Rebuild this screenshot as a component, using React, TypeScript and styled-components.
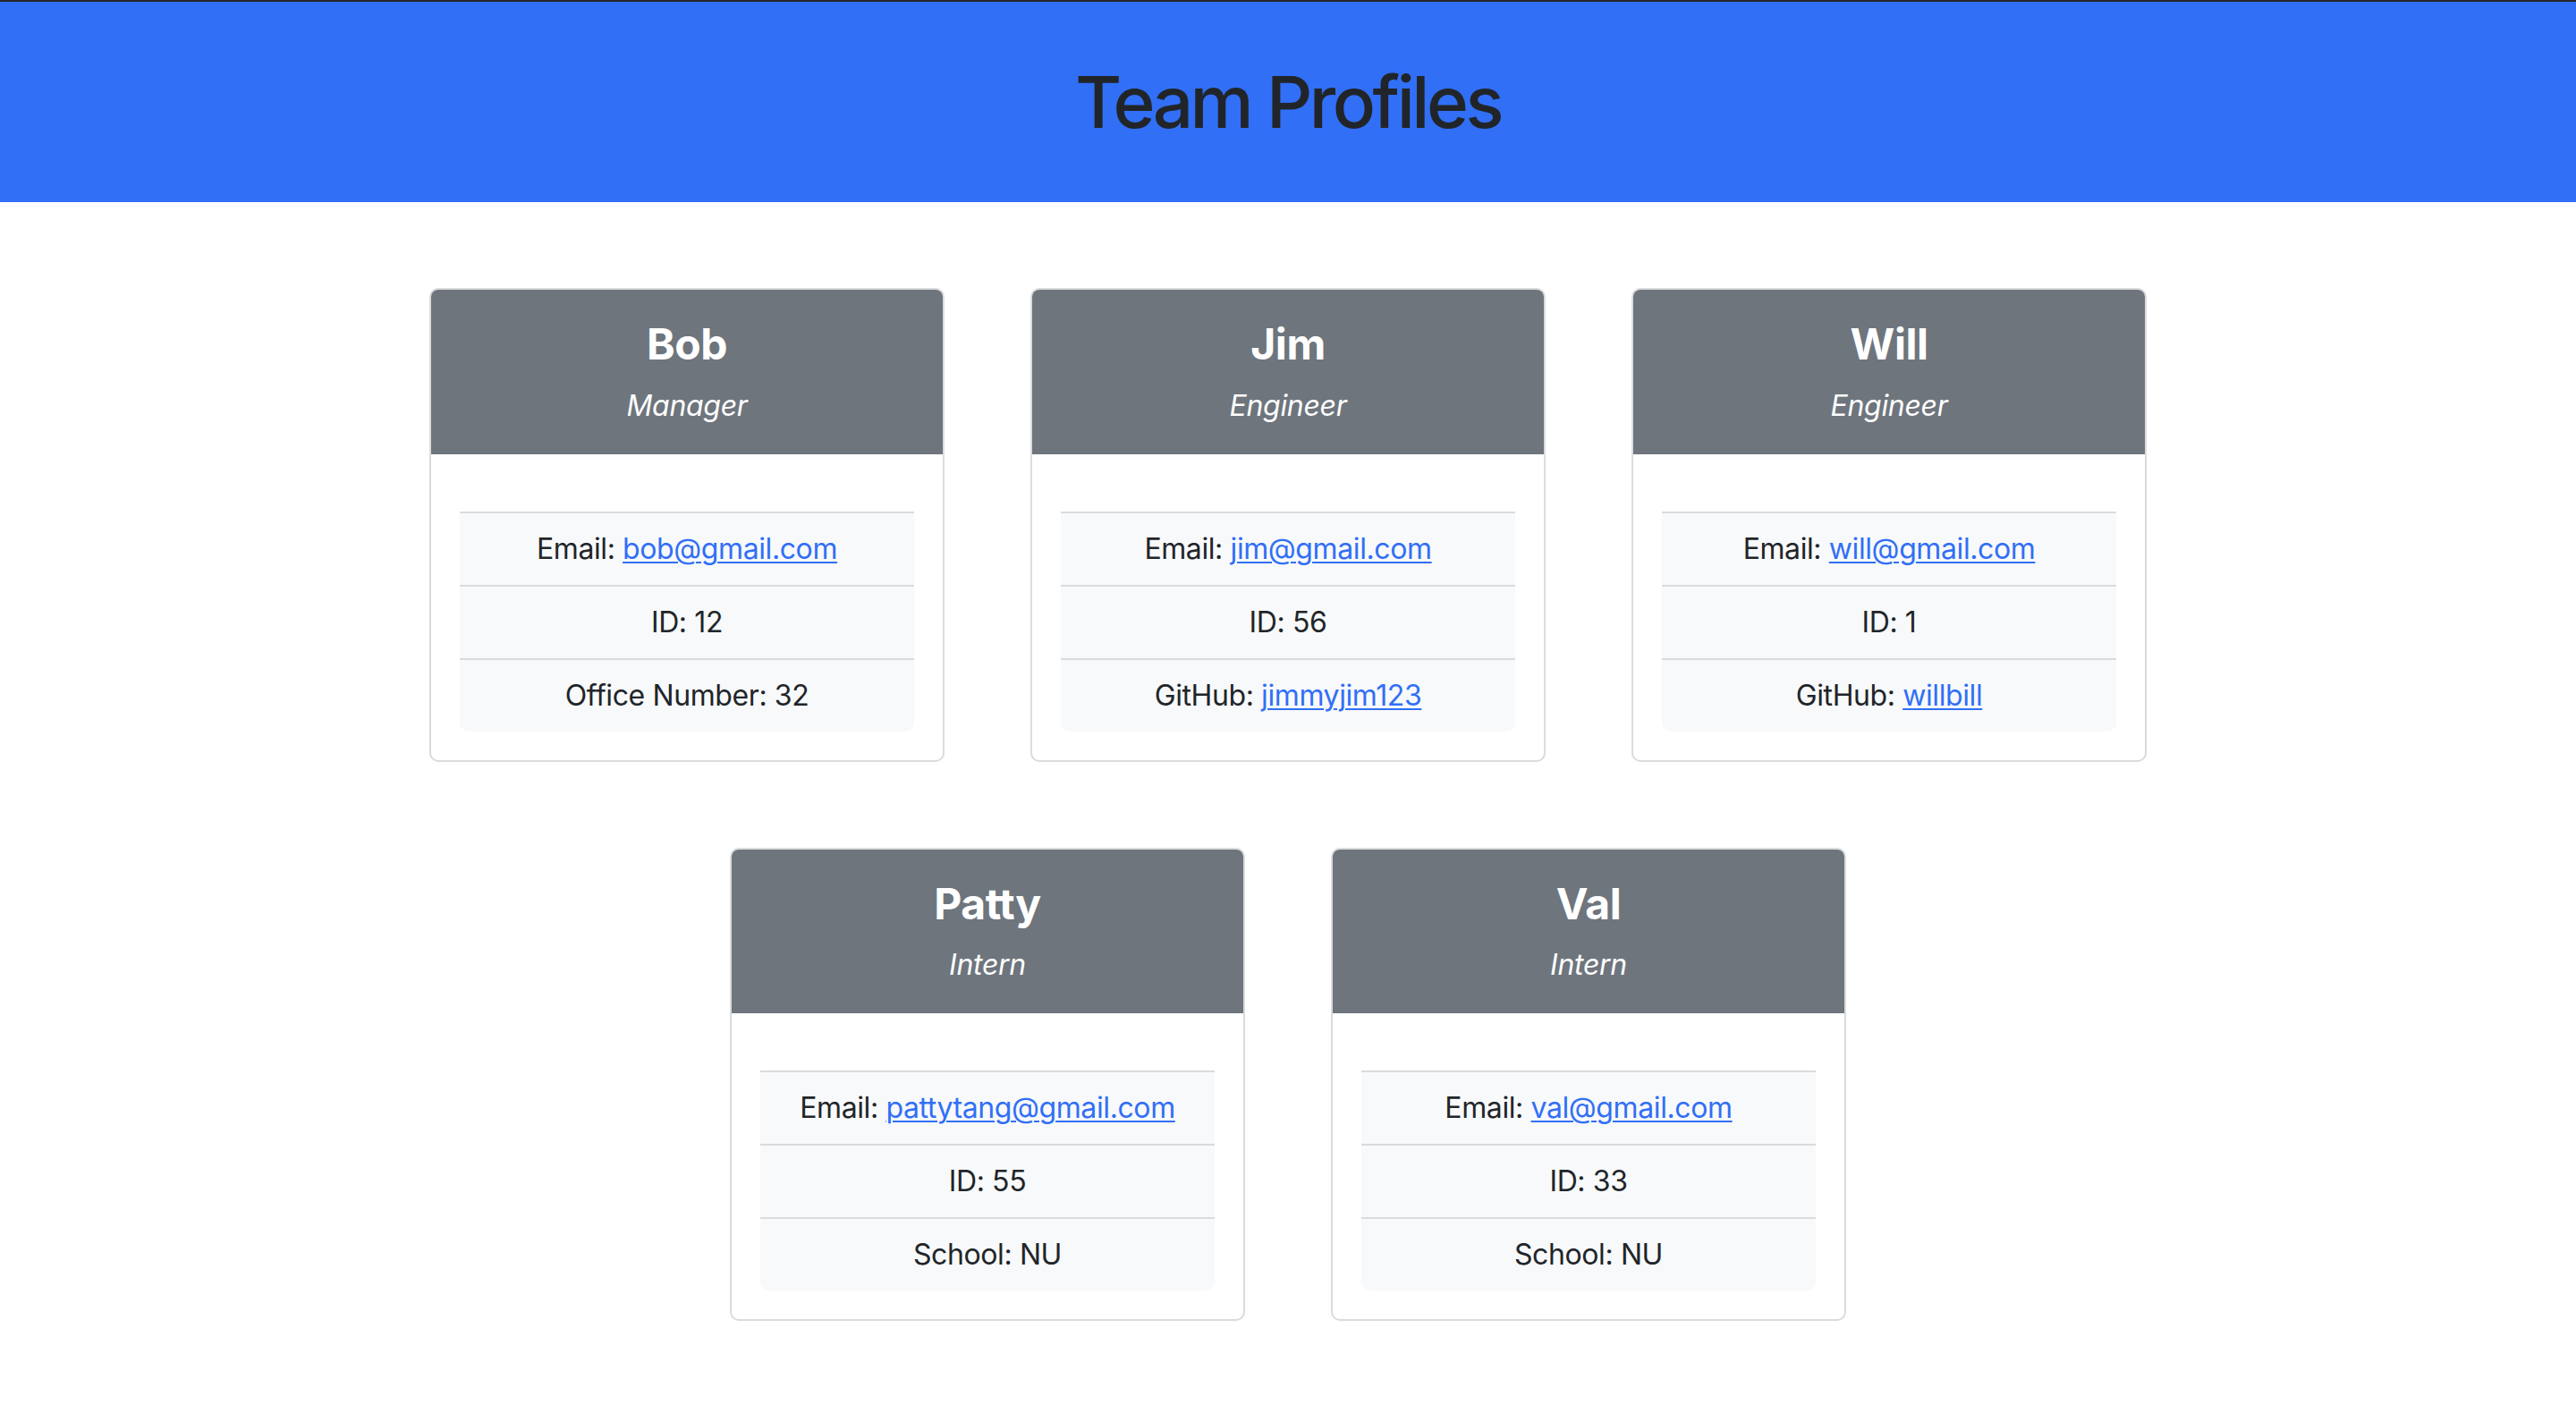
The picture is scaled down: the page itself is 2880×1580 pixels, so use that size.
import React from "react";
import styled, { createGlobalStyle } from "styled-components";

const GlobalStyle = createGlobalStyle`
  html, body { margin: 0; padding: 0; background: #ffffff; }
  body {
    font-family: Inter, "Noto Sans", "Liberation Sans", sans-serif;
    color: #212529;
    border-top: 2px solid #26272b;
  }
  * { box-sizing: border-box; }
`;

const Banner = styled.header`
  height: 224px;
  background: #316ff6;
  display: flex;
  align-items: center;
  justify-content: center;
`;

const Title = styled.h1`
  margin: 0;
  font-size: 80px;
  font-weight: 500;
  line-height: 1.2;
  color: #212529;
  letter-spacing: -3.5px;
`;

const Container = styled.main`
  max-width: 2640px;
  margin: 0 auto;
  padding: 48px 24px;
  display: flex;
  flex-wrap: wrap;
  justify-content: center;
`;

const Card = styled.article`
  width: 576px;
  margin: 48px;
  border: 2px solid #dadbdc;
  border-radius: 10px;
  overflow: hidden;
  background: #fff;
`;

const CardHeader = styled.div`
  background: #6e757d;
  color: #fff;
  text-align: center;
  padding: 32px 32px 30px;
`;

const Name = styled.h3`
  margin: 0 0 16px;
  font-size: 48px;
  font-weight: 700;
  line-height: 1.2;
  letter-spacing: -0.5px;
`;

const Role = styled.p`
  margin: 0;
  font-size: 32px;
  font-style: italic;
  line-height: 1.5;
  letter-spacing: -0.3px;
`;

const CardBody = styled.div`
  padding: 64px 32px 32px;
`;

const List = styled.ul`
  list-style: none;
  margin: 0;
  padding: 0;
  border-radius: 0 0 10px 10px;
  overflow: hidden;
`;

const Item = styled.li`
  background: #f8f9fa;
  border-top: 2px solid #dadbdc;
  padding: 16px 32px;
  font-size: 32px;
  line-height: 1.5;
  text-align: center;
  color: #212529;
  letter-spacing: -0.4px;
`;

const Link = styled.a`
  color: #316ff6;
  text-decoration: underline;
  text-underline-offset: 3px;
  text-decoration-thickness: 2px;
`;

type Member = {
  name: string;
  role: string;
  email: string;
  id: number;
  extraLabel: string;
  extraValue: string;
  extraLink?: boolean;
};

const team: Member[] = [
  { name: "Bob", role: "Manager", email: "bob@gmail.com", id: 12, extraLabel: "Office Number", extraValue: "32" },
  { name: "Jim", role: "Engineer", email: "jim@gmail.com", id: 56, extraLabel: "GitHub", extraValue: "jimmyjim123", extraLink: true },
  { name: "Will", role: "Engineer", email: "will@gmail.com", id: 1, extraLabel: "GitHub", extraValue: "willbill", extraLink: true },
  { name: "Patty", role: "Intern", email: "pattytang@gmail.com", id: 55, extraLabel: "School", extraValue: "NU" },
  { name: "Val", role: "Intern", email: "val@gmail.com", id: 33, extraLabel: "School", extraValue: "NU" },
];

const ProfileCard = ({ m }: { m: Member }) => (
  <Card>
    <CardHeader>
      <Name>{m.name}</Name>
      <Role>{m.role}</Role>
    </CardHeader>
    <CardBody>
      <List>
        <Item>
          Email: <Link href={`mailto:${m.email}`}>{m.email}</Link>
        </Item>
        <Item>ID: {m.id}</Item>
        <Item>
          {m.extraLabel}:{" "}
          {m.extraLink ? (
            <Link href={`https://github.com/${m.extraValue}`}>{m.extraValue}</Link>
          ) : (
            m.extraValue
          )}
        </Item>
      </List>
    </CardBody>
  </Card>
);

export default function App() {
  return (
    <>
      <GlobalStyle />
      <Banner>
        <Title>Team Profiles</Title>
      </Banner>
      <Container>
        {team.map((m) => (
          <ProfileCard key={m.name} m={m} />
        ))}
      </Container>
    </>
  );
}
